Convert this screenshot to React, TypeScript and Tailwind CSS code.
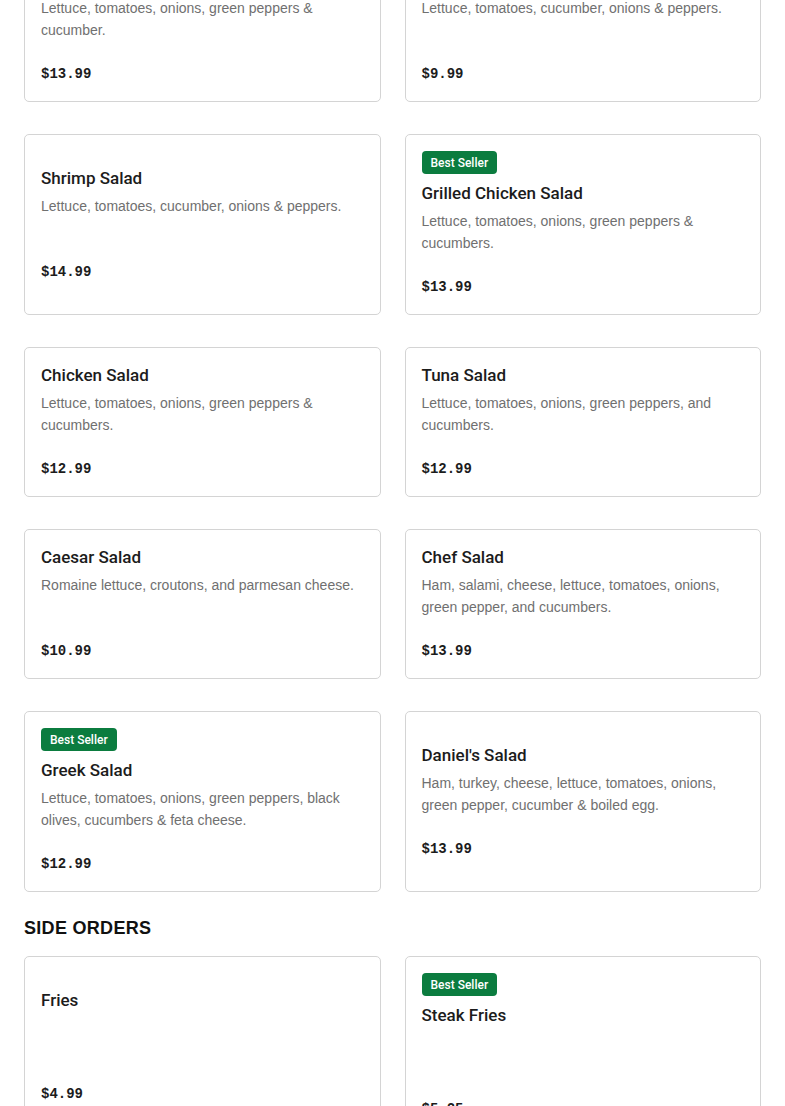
type Item = {
  name: string;
  desc?: string;
  price: string;
  bestSeller?: boolean;
};

const salads: Item[] = [
  { name: "Antipasto Salad", desc: "Lettuce, tomatoes, onions, green peppers & cucumber.", price: "$13.99" },
  { name: "Garden Salad", desc: "Lettuce, tomatoes, cucumber, onions & peppers.", price: "$9.99" },
  { name: "Shrimp Salad", desc: "Lettuce, tomatoes, cucumber, onions & peppers.", price: "$14.99" },
  { name: "Grilled Chicken Salad", desc: "Lettuce, tomatoes, onions, green peppers & cucumbers.", price: "$13.99", bestSeller: true },
  { name: "Chicken Salad", desc: "Lettuce, tomatoes, onions, green peppers & cucumbers.", price: "$12.99" },
  { name: "Tuna Salad", desc: "Lettuce, tomatoes, onions, green peppers, and cucumbers.", price: "$12.99" },
  { name: "Caesar Salad", desc: "Romaine lettuce, croutons, and parmesan cheese.", price: "$10.99" },
  { name: "Chef Salad", desc: "Ham, salami, cheese, lettuce, tomatoes, onions, green pepper, and cucumbers.", price: "$13.99" },
  { name: "Greek Salad", desc: "Lettuce, tomatoes, onions, green peppers, black olives, cucumbers & feta cheese.", price: "$12.99", bestSeller: true },
  { name: "Daniel's Salad", desc: "Ham, turkey, cheese, lettuce, tomatoes, onions, green pepper, cucumber & boiled egg.", price: "$13.99" },
];

const sides: Item[] = [
  { name: "Fries", price: "$4.99" },
  { name: "Steak Fries", price: "$5.25", bestSeller: true },
];

function MenuCard({ item }: { item: Item }) {
  return (
    <div className="flex flex-col justify-center rounded-[5px] border border-[#d4d4d4] bg-white px-4 py-4">
      {item.bestSeller && (
        <span className="mb-2 inline-flex h-[23px] w-fit items-center rounded-[4px] bg-[#0b7c3f] px-[9px] font-['Roboto',sans-serif] text-[12px] font-medium text-white">
          Best Seller
        </span>
      )}
      <h3 className="font-['Roboto',sans-serif] text-[17px] font-medium leading-[22px] text-[#1c1c1c]">{item.name}</h3>
      <p className="mt-[6px] min-h-[44px] text-[14px] leading-[22px] text-[#707070]">{item.desc}</p>
      <p className="mt-[22px] font-['Liberation_Mono',monospace] text-[14px] font-bold leading-[22px] text-[#1c1c1c]">
        {item.price}
      </p>
    </div>
  );
}

export default function App() {
  return (
    <main className="min-h-screen overflow-hidden bg-white px-6 font-['Liberation_Sans',Arial,sans-serif]">
      <div className="-mt-[48px] grid grid-cols-2 gap-x-6 gap-y-8">
        {salads.map((item) => (
          <MenuCard key={item.name} item={item} />
        ))}
      </div>

      <h2 className="mb-[16px] mt-[24px] text-[18px] font-bold leading-[24px] tracking-[0.3px] text-[#111]">
        SIDE ORDERS
      </h2>

      <div className="grid grid-cols-2 gap-x-6 gap-y-8">
        {sides.map((item) => (
          <MenuCard key={item.name} item={item} />
        ))}
      </div>
    </main>
  );
}
